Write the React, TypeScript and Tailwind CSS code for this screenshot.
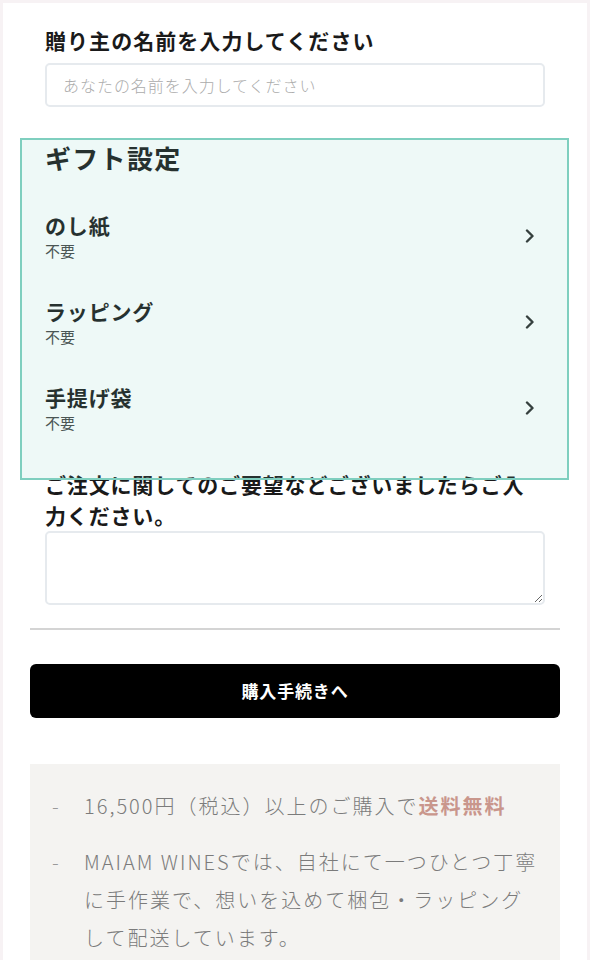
import React from "react";

const giftOptions = [
	{ label: "のし紙", value: "不要" },
	{ label: "ラッピング", value: "不要" },
	{ label: "手提げ袋", value: "不要" },
];

const Chevron = () => (
	<svg width="10" height="14" viewBox="0 0 10 14" fill="none">
		<path
			d="M2 1.5 L7.5 7 L2 12.5"
			stroke="#2b2b2b"
			strokeWidth="2.4"
			strokeLinecap="round"
			strokeLinejoin="round"
		/>
	</svg>
);

const App = () => {
	return (
		<div
			className="min-h-screen bg-white border-x-[3px] border-t-[3px] border-[#f7f2f4] px-[27px] pt-[22px] text-[#1a1a1a]"
			style={{ fontFamily: '"Noto Sans CJK JP", "Noto Sans", sans-serif' }}
		>
			<div className="px-[15px]">
				<h2 className="text-[21px] leading-[30px] font-bold tracking-[0.05em] mb-[8px]">
					贈り主の名前を入力してください
				</h2>
				<input
					type="text"
					placeholder="あなたの名前を入力してください"
					className="w-full h-[44px] rounded-[5px] border-2 border-[#e6eaee] px-[16px] text-[16px] tracking-[0.06em] font-light outline-none placeholder:text-[#ababab]"
				/>

				{/* gift settings */}
				<div className="relative mt-[34px]">
					<div className="absolute -top-[3px] -bottom-[29px] -left-[25px] -right-[24px] border-2 border-[#7fcfbf] bg-[#7fcfbf]/[0.13] pointer-events-none z-10"></div>
					<h3 className="text-[26px] leading-[34px] font-bold tracking-[0.05em] mb-[18px]">
						ギフト設定
					</h3>
					{giftOptions.map((opt) => (
						<div
							key={opt.label}
							className="flex items-center justify-between py-[18px] pr-[10px]"
						>
							<div>
								<p className="text-[21px] leading-[28px] font-bold tracking-[0.04em]">
									{opt.label}
								</p>
								<p className="mt-[2px] text-[15px] leading-[20px] text-[#444]">
									{opt.value}
								</p>
							</div>
							<Chevron />
						</div>
					))}
				</div>

				<h2 className="mt-[18px] text-[21px] leading-[31px] font-bold tracking-[0.04em]">
					ご注文に関してのご要望などございましたらご入力ください。
				</h2>
				<textarea className="block w-full h-[74px] rounded-[5px] border-2 border-[#e6eaee] outline-none"></textarea>
			</div>

			<hr className="mt-[23px] border-0 h-[2px] bg-[#d4d4d4]" />

			<button className="mt-[34px] w-full h-[54px] rounded-[6px] bg-black text-white text-[17px] font-bold tracking-[0.05em]">
				購入手続きへ
			</button>

			<div className="mt-[46px] bg-[#f4f3f1] pl-[22px] pr-[19px] pt-[23px] pb-[20px] text-[20px] leading-[38px] font-light tracking-[0.1em] text-[#7b7b7b]">
				<div className="flex">
					<span className="w-[32px] shrink-0 text-[#9a9a9a]">-</span>
					<p>
						16,500円（税込）以上のご購入で
						<span className="font-bold text-[#c9968c]">送料無料</span>
					</p>
				</div>
				<div className="flex mt-[18px]">
					<span className="w-[32px] shrink-0 text-[#9a9a9a]">-</span>
					<p>
						MAIAM WINESでは、自社にて一つひとつ丁寧に手作業で、想いを込めて梱包・ラッピングして配送しています。
					</p>
				</div>
			</div>
		</div>
	);
};

export default App;
